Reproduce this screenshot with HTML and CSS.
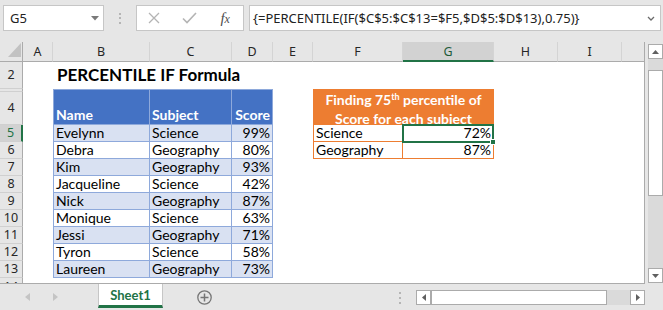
FILE: index.html
```html
<!DOCTYPE html>
<html>
<head>
<meta charset="utf-8">
<link rel="stylesheet" href="styles.css">
</head>
<body>
<div class="app">
  <div class="fbar">
    <div class="box namebox"><span>G5</span><svg class="dd" width="8" height="5" viewBox="0 0 8 5"><path d="M0 0H8L4 4.5Z" fill="#7a7a7a"/></svg></div>
    <div class="grip"><i></i><i></i><i></i></div>
    <div class="box fbtns">
      <div class="fbtn b1"><svg width="12" height="12" viewBox="0 0 12 12"><path d="M1 1L11 11M11 1L1 11" stroke="#b4b4b4" stroke-width="1.3" fill="none"/></svg></div>
      <div class="fbtn b2"><svg width="15" height="12" viewBox="0 0 15 12"><path d="M1 6.5L5 10.5L14 1" stroke="#b4b4b4" stroke-width="1.6" fill="none"/></svg></div>
      <div class="fbtn b3"><span class="fx">f<small>x</small></span></div>
    </div>
    <div class="box finput"><span class="ftext">{=PERCENTILE(IF($C$5:$C$13=$F5,$D$5:$D$13),0.75)}</span><svg class="dd" width="8" height="5" viewBox="0 0 8 5"><path d="M1 1L4 4L7 1" stroke="#6b6b6b" stroke-width="1.3" fill="none"/></svg></div>
  </div>

  <div class="main">
    <div class="grid">
      <div class="corner"><svg width="13" height="14" viewBox="0 0 13 14"><path d="M13 0V14H0Z" fill="#c2c2c2"/></svg></div>
      <div class="ch">A</div>
      <div class="ch">B</div>
      <div class="ch">C</div>
      <div class="ch">D</div>
      <div class="ch">E</div>
      <div class="ch">F</div>
      <div class="ch on">G</div>
      <div class="ch">H</div>
      <div class="ch">I</div>
      <div class="ch last"></div>

      <div class="rh">2</div>
      <div class="rh"></div>
      <div class="rh">4</div>
      <div class="rh on">5</div>
      <div class="rh">6</div>
      <div class="rh">7</div>
      <div class="rh">8</div>
      <div class="rh">9</div>
      <div class="rh">10</div>
      <div class="rh">11</div>
      <div class="rh">12</div>
      <div class="rh">13</div>
      <div class="rh cut">14</div>

      <div class="title">PERCENTILE IF Formula</div>

      <div class="tbl">
        <div class="th">Name</div><div class="th">Subject</div><div class="th num">Score</div>
        <div class="band">Evelynn</div><div class="band">Science</div><div class="band num">99%</div>
        <div>Debra</div><div>Geography</div><div class="num">80%</div>
        <div class="band">Kim</div><div class="band">Geography</div><div class="band num">93%</div>
        <div>Jacqueline</div><div>Science</div><div class="num">42%</div>
        <div class="band">Nick</div><div class="band">Geography</div><div class="band num">87%</div>
        <div>Monique</div><div>Science</div><div class="num">63%</div>
        <div class="band">Jessi</div><div class="band">Geography</div><div class="band num">71%</div>
        <div>Tyron</div><div>Science</div><div class="num">58%</div>
        <div class="band">Laureen</div><div class="band">Geography</div><div class="band num">73%</div>
      </div>

      <div class="otbl">
        <div class="oh"><span class="ln">Finding 75<sup>th</sup> percentile of</span> <span class="ln">Score for each subject</span></div>
        <div>Science</div><div class="num sel">72%<span class="selbox"><span class="handle"></span></span></div>
        <div>Geography</div><div class="num">87%</div>
      </div>
    </div>

    <div class="vscroll">
      <div class="sbtn"><svg width="7" height="4" viewBox="0 0 7 4"><path d="M0 4H7L3.5 0Z" fill="#606060"/></svg></div>
      <div class="vtrack"><div class="vthumb"></div></div>
      <div class="sbtn"><svg width="7" height="4" viewBox="0 0 7 4"><path d="M0 0H7L3.5 4Z" fill="#606060"/></svg></div>
    </div>
  </div>

  <div class="tabbar">
    <div class="navs">
      <svg width="5" height="8" viewBox="0 0 5 8"><path d="M5 0V8L0 4Z" fill="#c4c4c4"/></svg>
      <svg width="5" height="8" viewBox="0 0 5 8"><path d="M0 0V8L5 4Z" fill="#c4c4c4"/></svg>
    </div>
    <div class="tab">Sheet1</div>
    <svg class="add" width="15" height="15" viewBox="0 0 15 15"><circle cx="7.5" cy="7.5" r="6.7" stroke="#767676" stroke-width="1.3" fill="none"/><path d="M7.5 3.5V11.5M3.5 7.5H11.5" stroke="#767676" stroke-width="1.5"/></svg>
    <div class="hgrip"><i></i><i></i><i></i></div>
    <div class="hscroll">
      <div class="sbtn"><svg width="4" height="7" viewBox="0 0 4 7"><path d="M4 0V7L0 3.5Z" fill="#606060"/></svg></div>
      <div class="hthumb"></div>
      <div class="htrack"></div>
      <div class="sbtn"><svg width="4" height="7" viewBox="0 0 4 7"><path d="M0 0V7L4 3.5Z" fill="#606060"/></svg></div>
    </div>
  </div>
</div>
</body>
</html>
```

FILE: styles.css
```css
* { box-sizing: border-box; }
html, body { margin: 0; padding: 0; }
body {
  width: 663px;
  height: 310px;
  overflow: hidden;
  background: #e6e6e6;
  font-family: "Noto Sans", "Open Sans", sans-serif;
  color: #262626;
}
.app { width: 663px; height: 310px; display: flex; flex-direction: column; }

/* formula bar */
.fbar { height: 42px; flex: none; display: flex; align-items: flex-start; padding: 5px 2px 0 3px; }
.box { height: 26px; background: #fff; border: 1px solid #c6c6c6; display: flex; align-items: center; }
.namebox { width: 101px; padding: 0 4px 0 6px; font-size: 13px; color: #222; }
.dd { margin-left: auto; flex: none; }
.grip { width: 32px; height: 26px; display: flex; flex-direction: column; align-items: center; justify-content: center; gap: 2.5px; }
.grip i, .hgrip i { display: block; width: 2px; height: 2px; background: #b5b5b5; }
.fbtns { width: 108px; }
.fbtn { height: 24px; display: flex; align-items: center; justify-content: center; }
.b1 { width: 35px; }
.b2, .b3 { width: 36px; }
.fx { font-family: "Liberation Serif", serif; font-style: italic; font-size: 15px; color: #4d4d4d; }
.fx small { font-size: 12px; }
.finput { flex: 1; margin-left: 5px; padding: 0 5px 0 3px; font-size: 13px; color: #222; white-space: nowrap; }

/* sheet */
.main { height: 242px; flex: none; display: flex; }
.grid {
  width: 645px;
  height: 242px;
  background: #fff;
  border-right: 1px solid #ababab;
  border-bottom: 1px solid #ababab;
  display: grid;
  grid-template-columns: 23px 30px 97px 82px 41px 40px 90px 91px 64px 64px 22px;
  grid-template-rows: 20px 27px 3px 33px repeat(9, 17px) 5px;
  overflow: hidden;
}
.corner {
  background: #e6e6e6;
  border-right: 1px solid #ababab;
  border-bottom: 1px solid #ababab;
  display: flex;
  align-items: flex-end;
  justify-content: flex-end;
  padding: 0 1px 4px 0;
}
.ch {
  background: #e6e6e6;
  border-right: 1px solid #d4d4d4;
  border-bottom: 1px solid #ababab;
  font-size: 12.5px;
  display: flex;
  align-items: center;
  justify-content: center;
  color: #262626;
}
.ch.last { border-right: none; }
.ch.on { background: #d2d2d2; border-bottom: 2px solid #217346; color: #1e5b3a; }
.rh {
  grid-column: 1;
  background: #e6e6e6;
  border-right: 1px solid #ababab;
  border-bottom: 1px solid #d0d0d0;
  font-size: 12.5px;
  line-height: 16px;
  display: flex;
  align-items: center;
  justify-content: center;
  overflow: hidden;
}
.rh.on { background: #d2d2d2; color: #217346; border-right: 2px solid #217346; }
.rh.cut { align-items: flex-start; padding-top: 1px; border-bottom: none; }

.title {
  grid-column: 3 / 8;
  grid-row: 2;
  align-self: end;
  padding: 0 0 3px 4px;
  font-family: Lato, sans-serif;
  font-weight: 700;
  font-size: 17px;
  line-height: 22px;
  color: #000;
  white-space: nowrap;
}

.tbl {
  grid-column: 3 / 6;
  grid-row: 3 / 14;
  display: grid;
  grid-template-columns: 96px 82px 41px;
  grid-template-rows: 35px repeat(9, 17px);
  border-top: 1px solid #8ea9db;
  border-left: 1px solid #8ea9db;
  font-family: Lato, sans-serif;
  font-size: 14px;
  color: #000;
}
.tbl > div {
  border-right: 1px solid #8ea9db;
  border-bottom: 1px solid #8ea9db;
  padding: 0 2px;
  line-height: 16px;
  white-space: nowrap;
  overflow: hidden;
}
.tbl > .th {
  background: #4472c4;
  color: #fff;
  font-weight: 700;
  display: flex;
  align-items: flex-end;
  padding-bottom: 1px;
}
.tbl > .th.num { justify-content: flex-end; }
.tbl > .band { background: #d9e1f2; }
.num { text-align: right; }

.otbl {
  grid-column: 7 / 9;
  grid-row: 3 / 7;
  display: grid;
  grid-template-columns: 89px 91px;
  grid-template-rows: 35px 17px 17px;
  border-top: 1px solid #ed7d31;
  border-left: 1px solid #ed7d31;
  font-family: Lato, sans-serif;
  font-size: 14px;
  color: #000;
}
.otbl > div {
  border-right: 1px solid #ed7d31;
  border-bottom: 1px solid #ed7d31;
  padding: 0 2px;
  line-height: 16px;
  white-space: nowrap;
}
.otbl > .oh {
  grid-column: 1 / 3;
  background: #ed7d31;
  color: #fff;
  font-weight: 700;
  text-align: center;
  line-height: 19px;
  overflow: hidden;
  padding: 0;
  display: flex;
  flex-direction: column;
  align-items: center;
}
.oh .ln { display: block; white-space: nowrap; }
.oh sup { font-size: 9px; line-height: 0; vertical-align: 5px; }
.sel { position: relative; }
.selbox {
  position: absolute;
  left: -1px;
  top: -1px;
  right: -1px;
  bottom: -2px;
  border: 2px solid #217346;
}
.handle {
  position: absolute;
  right: -4px;
  bottom: -4px;
  width: 6px;
  height: 6px;
  background: #217346;
  border: 1px solid #fff;
}

/* vertical scrollbar */
.vscroll { flex: 1; display: flex; flex-direction: column; padding: 2px 0 1px 3px; }
.sbtn {
  width: 15px;
  height: 15px;
  flex: none;
  background: #fff;
  border: 1px solid #ababab;
  display: flex;
  align-items: center;
  justify-content: center;
}
.vtrack { flex: 1; width: 15px; background: #dadada; padding-top: 11px; }
.vthumb { height: 126px; background: #fff; border: 1px solid #ababab; }

/* tab bar */
.tabbar { height: 26px; flex: none; display: flex; align-items: flex-start; }
.navs { width: 98px; flex: none; display: flex; gap: 23px; padding: 9px 0 0 25px; }
.tab {
  width: 65px;
  height: 24px;
  flex: none;
  background: #fff;
  border-left: 1px solid #c6c6c6;
  border-right: 1px solid #c6c6c6;
  border-bottom: 3px solid #217346;
  font-family: Lato, sans-serif;
  font-weight: 700;
  font-size: 13px;
  color: #217346;
  display: flex;
  align-items: center;
  justify-content: center;
}
.add { margin: 6px 0 0 34px; flex: none; }
.hgrip { margin: 8px 0 0 187px; display: flex; flex-direction: column; gap: 3px; }
.hscroll { margin: 6px 0 0 15px; width: 229px; height: 15px; display: flex; background: #dadada; }
.hthumb { width: 176px; height: 15px; background: #fff; border: 1px solid #ababab; }
.htrack { flex: 1; }
```
